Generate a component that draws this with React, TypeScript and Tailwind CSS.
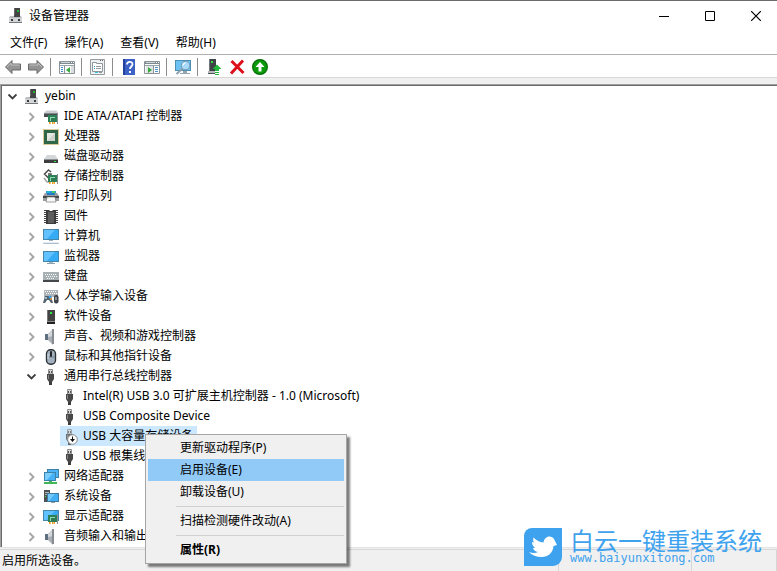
import { useState } from "react";
import type { ReactNode } from "react";
import clsx from "clsx";

type Node = {
  label: string;
  icon: () => ReactNode;
  leaf?: boolean;
  children?: Node[];
};

type IconProps = { children: ReactNode };

function Icon({ children }: IconProps) {
  return (
    <svg viewBox="0 0 16 16" className="w-4 h-4 shrink-0" aria-hidden="true">
      {children}
    </svg>
  );
}

/* ---------- device icons ---------- */

const ComputerTower = () => (
  <Icon>
    <path d="M6 0h6v10H6z" fill="#444" />
    <path d="M6 0h1v10H6z" fill="#6b6b6b" />
    <path d="M9 2h2v2H9z" fill="#1fb434" />
    <path d="M2 8h11l1 2v5H1v-5z" fill="#b9bdc0" />
    <path d="M1 10h13v4H1z" fill="#d3d6d9" />
    <path d="M1 14h13v1H1z" fill="#75797c" />
    <path d="M6 7h6v2H6z" fill="#444" />
    <path d="M3 11h2v2H3zM10 11h2v2h-2z" fill="#3a3a3a" />
  </Icon>
);

const Card = () => (
  <>
    <path d="M5 6h9v7H5z" fill="#2c8057" />
    <path d="M7 8h5v4H7z" fill="#8fdcae" />
    <path d="M8 9h4v3H8z" fill="#2f7a54" />
    <path d="M14 5h1v10h-1z" fill="#8b8f90" />
    <path d="M6 13h2v2H6zM9 13h3v2H9z" fill="#f0a030" />
    <path d="M7 13h.5v2H7zM10 13h.5v2H10z" fill="#fbe2a0" />
  </>
);

const IdeIcon = () => (
  <Icon>
    <path d="M4 1h9l2 3v1H1V4z" fill="#c9ccce" />
    <path d="M4 1h9l1 1H3z" fill="#e6e7e8" />
    <path d="M1 4h14v4H1z" fill="#4b4e50" />
    <path d="M1 4h14v1H1z" fill="#83878a" />
    <Card />
  </Icon>
);

const CpuIcon = () => (
  <Icon>
    <rect x="0.5" y="0.5" width="15" height="15" fill="none" stroke="#b79332" strokeDasharray="1 1" />
    <path d="M1 1h14v14H1z" fill="#2f6647" />
    <path d="M4 4h8v8H4z" fill="#e4e6e2" />
    <path d="M4 12l8-8v8z" fill="#ced2cd" />
  </Icon>
);

const DiskIcon = () => (
  <Icon>
    <path d="M4 6h8l3 4H1z" fill="#d4d7d9" />
    <path d="M1 10h14v4H1z" fill="#3b3d3e" />
    <path d="M1 10h14v1H1z" fill="#8d9092" />
    <path d="M11 12h2v1h-2z" fill="#3ae04c" />
  </Icon>
);

const StorageIcon = () => (
  <Icon>
    <path d="M8 3L5.500 1 1.500 5l4 4L8 7V5H5" fill="none" stroke="#4d4d4d" strokeWidth="1.500" />
    <path d="M1 9l3 4h2" fill="none" stroke="#a2a2a2" strokeWidth="1.500" />
    <Card />
  </Icon>
);

const PrinterIcon = () => (
  <Icon>
    <path d="M3 2h10v4H3z" fill="#2f8fe0" />
    <path d="M4 2h3v3H4z" fill="#20b8d8" />
    <path d="M9 2h3v3H9z" fill="#3fcf5a" />
    <path d="M2 4h2v1h8V4h2l2 3v5H0V7z" fill="#9a9ea1" />
    <path d="M0 7h16v2H0z" fill="#45484a" />
    <path d="M4 4h8v2H4z" fill="#2779c5" />
    <path d="M4 8h8l1 5H3z" fill="#f6f8fa" stroke="#666" strokeWidth="0.600" />
  </Icon>
);

const FirmwareIcon = () => (
  <Icon>
    <path d="M2.500 1v14M13.500 1v14" stroke="#444" strokeWidth="3" strokeDasharray="1 1" />
    <path d="M3 1h3l1 1h2l1-1h3v14H3z" fill="#3c3c3c" />
    <path d="M5 3h6v11H5z" fill="#5d5d5d" />
  </Icon>
);

const Screen = ({ y = 1 }: { y?: number }) => (
  <>
    <path d={`M0 ${y}h16v11H0z`} fill="#4487ab" />
    <path d={`M1 ${y + 1}h14v9H1z`} fill="#35aaf5" />
    <path d={`M1 ${y + 1}h11l-8 9H1z`} fill="#62c2ff" />
  </>
);

const PcIcon = () => (
  <Icon>
    <Screen y={0} />
    <path d="M6 11h4v1H6z" fill="#9db2c0" />
    <path d="M1 13h14l1 2H0z" fill="#aebfcb" />
    <path d="M1 13h14v1H1z" fill="#e4edf3" />
  </Icon>
);

const MonitorIcon = () => (
  <Icon>
    <Screen y={2} />
    <path d="M6 13h4v1H6z" fill="#a8b8c3" />
    <path d="M4 14h8v1H4z" fill="#8ca2b1" />
  </Icon>
);

const KeyboardIcon = () => (
  <Icon>
    <path d="M0 3h16v10H0z" fill="#a9b0b4" />
    <path d="M0 11h16v2H0z" fill="#44484b" />
    <path d="M2 5.500h12M3 7.500h12M4 9.500h8" stroke="#f7f8f9" strokeDasharray="1 1" />
  </Icon>
);

const HidIcon = () => (
  <Icon>
    <path d="M1 1h14v7H1z" fill="#aeb4b7" />
    <path d="M2 2.500h12M3 4.500h11" stroke="#fff" strokeDasharray="1 1" />
    <path d="M2 7h6l2 7H8l-2-3H4l-2 3H0z" fill="#54616b" />
    <circle cx="3" cy="9" r="1" fill="#a9d7f5" />
    <circle cx="7" cy="8" r="1.500" fill="#3ba0e4" />
    <circle cx="8" cy="10" r="1" fill="#ef9a3a" />
    <rect x="11" y="6" width="4.500" height="8.500" rx="2" fill="#3d4348" />
    <path d="M13 8v3" stroke="#d8dee2" />
  </Icon>
);

const SoftwareIcon = () => (
  <Icon>
    <path d="M4 1h8v12H4z" fill="#434343" />
    <path d="M4 1h1v12H4z" fill="#777" />
    <path d="M7 3h2v2H7z" fill="#2ee843" />
    <path d="M4 13h8v2H4z" fill="#222" />
    <path d="M4 12h8v1H4z" fill="#8a8a8a" />
  </Icon>
);

const SpeakerIcon = () => (
  <Icon>
    <path d="M2 5h4v6H2z" fill="#5e6f80" />
    <path d="M5 5l5-5v16l-5-5z" fill="#a9afb4" />
    <path d="M5 5l5-5v7L5 8z" fill="#d3d7da" />
    <path d="M9 0h2v15H9z" fill="#868c91" />
  </Icon>
);

const MouseIcon = () => (
  <Icon>
    <rect x="3.500" y="0.700" width="9" height="14.600" rx="4" fill="#a3b1bf" stroke="#2d3236" strokeWidth="1.400" />
    <path d="M4.500 8h7" stroke="#6b7882" strokeWidth="0.800" />
    <path d="M5 5v5" stroke="#d7dfe6" />
    <rect x="7" y="2" width="2" height="6" rx="1" fill="#23272a" />
  </Icon>
);

const UsbPlug = ({ faded }: { faded?: boolean }) => (
  <g opacity={faded ? 0.75 : 1}>
    <path d="M5.500 0.500h4V5h-4z" fill="#d9d9d9" stroke="#8d8d8d" />
    <path d="M6 2h1v2H6zM8 2h1v2H8z" fill="#555" />
    <path d="M4 5h7v5l-2 3H6l-2-3z" fill="#484848" />
    <path d="M5 6h1v4H5z" fill="#858585" />
    <path d="M6 13h3v3H6z" fill="#3e3e3e" />
  </g>
);

const UsbIcon = () => (
  <Icon>
    <UsbPlug />
  </Icon>
);

const UsbDisabledIcon = () => (
  <Icon>
    <UsbPlug faded />
    <circle cx="10.500" cy="10.500" r="4.800" fill="#fff" stroke="#8a8a8a" />
    <path d="M10 7.500h1V10h2l-2.500 3L8 10h2z" fill="#111" />
  </Icon>
);

const NetworkIcon = () => (
  <Icon>
    <path d="M4 0h12v9H4z" fill="#3b82ab" />
    <path d="M5 1h10v7H5z" fill="#4cb4f6" />
    <path d="M1 3h12v9H1z" fill="#3b82ab" />
    <path d="M2 4h10v7H2z" fill="#45b0f6" />
    <path d="M2 4h8l-6 7H2z" fill="#7bcdfd" />
    <path d="M6 12h3v1h5v2H1v-2h5z" fill="#43b655" />
  </Icon>
);

const SystemIcon = () => (
  <Icon>
    <path d="M1 1h6v12H1z" fill="#4d5153" />
    <path d="M2 3h4v1H2zM2 5h4v1H2z" fill="#aeb3b6" />
    <path d="M2 7h1v1H2z" fill="#3be04f" />
    <path d="M4 4h12v9H4z" fill="#40799c" />
    <path d="M5 5h10v7H5z" fill="#41aff5" />
    <path d="M5 5h7l-6 7H5z" fill="#72c8fc" />
    <path d="M8 13h4v1H8z" fill="#8ca2b1" />
  </Icon>
);

const DisplayIcon = () => (
  <Icon>
    <Screen y={1} />
    <Card />
  </Icon>
);

/* ---------- toolbar icons ---------- */

const BackIcon = () => (
  <Icon>
    <path d="M0.500 8L7 1.500V5h8.500v6H7v3.500z" fill="#949494" stroke="#696969" />
    <path d="M2 8l4-4v2h8.500" fill="none" stroke="#c2c2c2" />
  </Icon>
);

const ForwardIcon = () => (
  <Icon>
    <path d="M15.500 8L9 1.500V5H.5v6H9v3.500z" fill="#949494" stroke="#696969" />
    <path d="M1.500 6H10V4l4 4" fill="none" stroke="#c2c2c2" />
  </Icon>
);

const WindowFrame = () => (
  <>
    <path d="M.5 2.500h15v12H.5z" fill="#fdfdfd" stroke="#8b9298" />
    <path d="M1 3h14v2H1z" fill="#7e8990" />
    <path d="M2 3h9v1H2z" fill="#cfd6da" />
    <path d="M12 3h1v1h-1zM14 3h1v1h-1z" fill="#fff" />
    <path d="M1 6h14v1H1z" fill="#9aa3a9" />
  </>
);

const ConsoleTreeIcon = () => (
  <Icon>
    <WindowFrame />
    <path d="M5.500 7v7" stroke="#8b9298" />
    <path d="M2 8h2v1H2zM2 10h2v1H2zM2 12h2v1H2z" fill="#3d8bd0" />
    <path d="M11 8v6l-4-3z" fill="#36a93c" />
    <path d="M12 7h3v7h-3z" fill="#d9dddf" />
  </Icon>
);

const PropertiesIcon = () => (
  <Icon>
    <path d="M.5.500h14v15H.5z" fill="#eef0f1" stroke="#979ca0" />
    <path d="M10 1h1v1h-1zM12 1h1v1h-1z" fill="#666" />
    <path d="M2.500 3.500h4v1h6v8h-10z" fill="#fff" stroke="#8f989e" />
    <path d="M4 7h1v1H4zM4 9h1v1H4z" fill="#2b94c9" />
    <path d="M6 7h5v1H6zM6 9h5v1H6z" fill="#92999e" />
    <path d="M5 13h3v1H5z" fill="#2ec3e0" />
    <path d="M9 13h3v1H9z" fill="#8b979d" />
  </Icon>
);

const HelpIcon = () => (
  <Icon>
    <path d="M2 0h12v16H2z" fill="#3c62c5" />
    <path d="M2 0h2v16H2z" fill="#24429b" />
    <path d="M6 5.500C6 2 11.500 2 11.500 5.200 11.500 7.500 9 7.500 9 10" fill="none" stroke="#fff" strokeWidth="1.800" />
    <path d="M8 12h2v2H8z" fill="#fff" />
  </Icon>
);

const ActionPaneIcon = () => (
  <Icon>
    <WindowFrame />
    <path d="M2 7h7v7H2z" fill="#e3e6e8" />
    <path d="M9.500 7v7" stroke="#8b9298" />
    <path d="M4 8v6l4-3z" fill="#36a93c" />
    <path d="M11 8h3v1h-3zM11 10h3v1h-3zM11 12h3v1h-3z" fill="#4a93cc" />
  </Icon>
);

const ScanIcon = () => (
  <Icon>
    <path d="M0 1h16v11H0z" fill="#4d8fb4" />
    <path d="M1 2h14v9H1z" fill="#6cc3f3" />
    <path d="M5 14h10v1H5zM8 12h4v2H8z" fill="#93a6b1" />
    <path d="M7.500 9.500l-6 5.500" stroke="#8aa0ae" strokeWidth="2" />
    <circle cx="10.500" cy="6.500" r="4.300" fill="#a9dafa" stroke="#7397ab" />
    <path d="M8 6.500A2.500 2.500 0 0 1 10.500 4" fill="none" stroke="#fff" />
  </Icon>
);

const UpdateDriverIcon = () => (
  <Icon>
    <path d="M3 0h7v12H3z" fill="#3f4346" />
    <path d="M3 0h1v12H3z" fill="#75797c" />
    <path d="M5 2h2v2H5z" fill="#35dc49" />
    <path d="M2 12h7v2H2z" fill="#b5b9bb" />
    <path d="M2 14h7v1H2z" fill="#505456" />
    <path d="M11 5.500l4.500 4.500H13v2H9v-2H6.500z" fill="#22b83a" />
    <path d="M9 13h4v1H9zM9 15h4v1H9z" fill="#22b83a" />
  </Icon>
);

const UninstallIcon = () => (
  <Icon>
    <path d="M2.500 2L14.500 14M14 1.500L2 14.500" stroke="#dc101b" strokeWidth="3" />
  </Icon>
);

const EnableIcon = () => (
  <Icon>
    <circle cx="8" cy="8" r="7.400" fill="#0b9a0b" stroke="#076e07" strokeWidth="1.200" />
    <path d="M8 3l4.500 5H9.500v4.500h-3V8h-3z" fill="#fff" />
  </Icon>
);

/* ---------- data ---------- */

const SELECTED = "USB 大容量存储设备";

const tree: Node = {
  label: "yebin",
  icon: ComputerTower,
  children: [
    { label: "IDE ATA/ATAPI 控制器", icon: IdeIcon },
    { label: "处理器", icon: CpuIcon },
    { label: "磁盘驱动器", icon: DiskIcon },
    { label: "存储控制器", icon: StorageIcon },
    { label: "打印队列", icon: PrinterIcon },
    { label: "固件", icon: FirmwareIcon },
    { label: "计算机", icon: PcIcon },
    { label: "监视器", icon: MonitorIcon },
    { label: "键盘", icon: KeyboardIcon },
    { label: "人体学输入设备", icon: HidIcon },
    { label: "软件设备", icon: SoftwareIcon },
    { label: "声音、视频和游戏控制器", icon: SpeakerIcon },
    { label: "鼠标和其他指针设备", icon: MouseIcon },
    {
      label: "通用串行总线控制器",
      icon: UsbIcon,
      children: [
        { label: "Intel(R) USB 3.0 可扩展主机控制器 - 1.0 (Microsoft)", icon: UsbIcon, leaf: true },
        { label: "USB Composite Device", icon: UsbIcon, leaf: true },
        { label: SELECTED, icon: UsbDisabledIcon, leaf: true },
        { label: "USB 根集线", icon: UsbIcon, leaf: true },
      ],
    },
    { label: "网络适配器", icon: NetworkIcon },
    { label: "系统设备", icon: SystemIcon },
    { label: "显示适配器", icon: DisplayIcon },
    { label: "音频输入和输出", icon: SpeakerIcon },
  ],
};

const toolbar = [
  [
    { label: "后退", icon: BackIcon },
    { label: "前进", icon: ForwardIcon },
  ],
  [{ label: "显示/隐藏控制台树", icon: ConsoleTreeIcon }],
  [{ label: "属性", icon: PropertiesIcon }],
  [
    { label: "帮助", icon: HelpIcon },
    { label: "显示/隐藏操作窗格", icon: ActionPaneIcon },
  ],
  [{ label: "扫描检测硬件改动", icon: ScanIcon }],
  [
    { label: "更新驱动程序", icon: UpdateDriverIcon },
    { label: "卸载设备", icon: UninstallIcon },
    { label: "启用设备", icon: EnableIcon },
  ],
];

const menuGroups = [
  ["更新驱动程序(P)", "启用设备(E)", "卸载设备(U)"],
  ["扫描检测硬件改动(A)"],
  ["属性(R)"],
];

/* ---------- parts ---------- */

function TitleBar() {
  return (
    <header className="flex items-center h-[31px] border-t border-[#6b6b6b] pl-2">
      <ComputerTower />
      <h1 className="flex-1 pl-[5px]">设备管理器</h1>
      <div className="flex h-full -mr-0.5">
        <button aria-label="最小化" className="w-[46px] flex items-center justify-center hover:bg-gray-200">
          <svg viewBox="0 0 10 10" className="w-2.5 h-2.5">
            <path d="M0 5h10v1H0z" />
          </svg>
        </button>
        <button aria-label="最大化" className="w-[46px] flex items-center justify-center hover:bg-gray-200">
          <svg viewBox="0 0 10 10" className="w-2.5 h-2.5">
            <path d="M.5.500h9v9h-9z" fill="none" stroke="#000" />
          </svg>
        </button>
        <button aria-label="关闭" className="w-[46px] flex items-center justify-center hover:bg-red-500">
          <svg viewBox="0 0 10 10" className="w-2.5 h-2.5">
            <path d="M0 0l10 10M10 0L0 10" stroke="#000" strokeWidth="1.200" />
          </svg>
        </button>
      </div>
    </header>
  );
}

function Toolbar() {
  return (
    <div role="toolbar" className="flex items-center h-[23px] pt-0.5 pl-px border-b border-[#d8d8d8]">
      {toolbar.map((group, i) => (
        <div key={i} className="flex items-center">
          {i > 0 && <div className="w-px h-[18px] ml-[3px] mr-1 bg-[#8c8c8c]" />}
          {group.map((item) => (
            <button
              key={item.label}
              aria-label={item.label}
              className="w-[23px] h-5 flex items-center justify-center hover:bg-sky-100"
            >
              <item.icon />
            </button>
          ))}
        </div>
      ))}
    </div>
  );
}

function ContextMenu() {
  return (
    <div
      role="menu"
      className="absolute left-[85px] top-2 z-10 w-[202px] p-0.5 bg-[#f0f0f0] border border-[#a5a5a5] shadow-[3px_3px_2px_rgba(0,0,0,0.5)]"
    >
      {menuGroups.map((group, i) => (
        <div key={i}>
          {i > 0 && <div role="separator" className="h-px my-[3px] ml-7 bg-[#d0d0d0]" />}
          {group.map((item) => (
            <button
              key={item}
              role="menuitem"
              className={clsx(
                "block w-full h-[22px] pl-8 text-left leading-[22px]",
                item === "启用设备(E)" && "bg-[#91c9f7]",
                item === "属性(R)" && "font-bold"
              )}
            >
              {item}
            </button>
          ))}
        </div>
      ))}
    </div>
  );
}

function TreeItem({ node }: { node: Node }) {
  const [open, setOpen] = useState(!!node.children);
  const selected = node.label === SELECTED;

  return (
    <li role="treeitem" aria-expanded={node.leaf ? undefined : open} aria-selected={selected}>
      <div className="flex items-center h-5">
        {node.leaf ? (
          <span className="w-5" />
        ) : (
          <button
            aria-label={open ? "折叠" : "展开"}
            className="w-5 h-5 pt-0.5 flex items-center justify-center"
            onClick={() => setOpen(!open)}
          >
            <svg viewBox="0 0 10 10" className="w-2.5 h-2.5" fill="none" strokeWidth="1.900">
              {open ? <path d="M1.500 2.500l4 4 4-4" stroke="#404040" /> : <path d="M3.500 1l4 4-4 4" stroke="#a6a6a6" />}
            </svg>
          </button>
        )}
        <div className="relative">
          <button
            className={clsx(
              "flex items-center gap-[5px] h-5 pt-0.5 pl-0.5 pr-1 whitespace-nowrap",
              selected && "bg-[#cce8ff]"
            )}
          >
            <node.icon />
            <span className="pb-0.5">{node.label}</span>
          </button>
          {selected && <ContextMenu />}
        </div>
      </div>
      {node.children && open && (
        <ul role="group" className="pl-[19px]">
          {node.children.map((child) => (
            <TreeItem key={child.label} node={child} />
          ))}
        </ul>
      )}
    </li>
  );
}

function Watermark() {
  return (
    <div className="absolute right-2 bottom-[5px] z-20 flex items-start gap-2 text-[#3ea2ee] pointer-events-none">
      <svg viewBox="0 0 38 38" className="w-[38px] h-[38px]" aria-hidden="true">
        <path d="M8 0h30v29a9 9 0 0 1-9 9H0V8a8 8 0 0 1 8-8z" fill="#3ea2ee" />
        <path
          d="M5 24c4 1.500 7 1 9 0-3-.5-4.500-2-5-4h2c-2-2-3-3.500-3-6l2 .5c-1-1.500-1-3-.5-5 3 3 6 4.500 10 5 .5-3.500 3-6 6-6 2 0 3.500 1 4.500 2.500L33 17l-3.500 1c-.5 6.500-5 11-12 11-5 0-9.500-1.500-12.500-5z"
          fill="#fff"
        />
      </svg>
      <div className="w-[199px]">
        <p className="text-2xl leading-6 whitespace-nowrap font-['Noto_Sans_CJK_SC',sans-serif]">白云一键重装系统</p>
        <p className="text-xs leading-3 font-['DejaVu_Sans_Mono',monospace]">www.baiyunxitong.com</p>
      </div>
    </div>
  );
}

export default function App() {
  return (
    <div className="relative min-h-screen flex flex-col overflow-hidden bg-white text-black text-xs font-['Noto_Sans','Noto_Sans_CJK_SC',sans-serif] select-none">
      <TitleBar />
      <nav className="flex items-center gap-px h-6 pl-0.5 border-b border-[#b0b0b0]">
        {["文件(F)", "操作(A)", "查看(V)", "帮助(H)"].map((item) => (
          <button key={item} className="px-2 leading-5 hover:bg-sky-100">
            {item}
          </button>
        ))}
      </nav>
      <Toolbar />
      <main className="flex-1 flex flex-col pt-1.5 bg-[#f0f0f0]">
        <div className="flex-1 border-t border-l border-[#a0a0a0]">
          <ul role="tree" aria-label="设备" className="h-full pb-px bg-white border-t border-l border-[#696969]">
            <TreeItem node={tree} />
          </ul>
        </div>
      </main>
      <footer className="flex h-6 pt-px bg-[#f0f0f0] border-t border-[#e3e3e3]">
        <p className="flex-1 pl-0.5 leading-[22px] border-t border-r border-[#d7d7d7]">启用所选设备。</p>
        <div className="w-[133px] border-t border-r border-[#d7d7d7]" />
        <div className="w-[85px] border-t border-r border-[#d7d7d7]" />
      </footer>
      <Watermark />
    </div>
  );
}
